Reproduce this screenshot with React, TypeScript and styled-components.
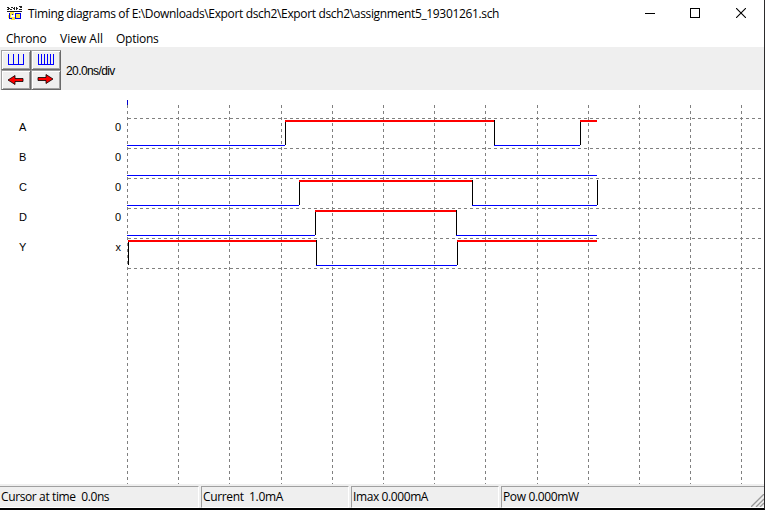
import React from "react";
import styled, { createGlobalStyle } from "styled-components";

const GlobalStyle = createGlobalStyle`
  * { box-sizing: border-box; }
  body { margin: 0; background: #fff; overflow: hidden; }
`;

const Window = styled.div`
  width: 765px;
  height: 510px;
  display: flex;
  flex-direction: column;
  background: #fff;
  color: #000;
  border-right: 1px solid #2c2b2c;
  border-bottom: 2px solid #000;
  font: 12px/16px "Open Sans", "Noto Sans", sans-serif;
  white-space: pre;
  overflow: hidden;
`;

const TitleBar = styled.header`
  height: 30px;
  flex: none;
  display: flex;
  padding: 6px 18px 0 7px;
`;

const Title = styled.h1`
  margin: 0 0 0 6px;
  flex: 1;
  font-size: 12px;
  font-weight: 400;
  letter-spacing: -0.345px;
`;

const Controls = styled.div`
  display: flex;
  gap: 35px;
  padding-top: 2px;
`;

const MenuBar = styled.nav`
  height: 17px;
  flex: none;
  display: flex;
  padding-left: 6px;
`;

const MenuItem = styled.span<{ $width: number; $spacing?: number }>`
  width: ${(p) => p.$width}px;
  letter-spacing: ${(p) => p.$spacing ?? 0}px;
  line-height: 17px;
`;

const Toolbar = styled.div`
  height: 43px;
  flex: none;
  display: flex;
  align-items: center;
  gap: 5px;
  padding: 2px 0 0 1px;
  background: #efefef;
`;

const ButtonGrid = styled.div`
  display: grid;
  grid-template-columns: 30px 30px;
  grid-template-rows: 20px 20px;
`;

const ToolButton = styled.button`
  display: flex;
  align-items: center;
  justify-content: center;
  padding: 0 1px 0 0;
  background: #efefef;
  border: 1px solid;
  border-color: #a0a0a0 #696969 #696969 #a0a0a0;
  box-shadow: inset 1px 1px #fff, inset -1px -1px #a0a0a0;
`;

const Scale = styled.span`
  font: 12px/16px "Liberation Sans", sans-serif;
  letter-spacing: -0.6px;
  padding-top: 2px;
`;

const Workspace = styled.main`
  height: 394px;
  flex: none;
  display: flex;
`;

const Signals = styled.div`
  width: 127px;
  padding: 22px 6px 0 19px;
`;

const SignalRow = styled.div`
  height: 30px;
  display: flex;
  justify-content: space-between;
  font: 11px/30px "Liberation Sans", sans-serif;
`;

const StatusBar = styled.footer`
  height: 24px;
  flex: none;
  display: grid;
  grid-template-columns: 199px 148px 148px 1fr;
  column-gap: 2px;
  padding-top: 2px;
  background: #efefef;
`;

const StatusPanel = styled.div<{ $first?: boolean; $last?: boolean; $spacing: number }>`
  display: flex;
  justify-content: space-between;
  align-items: flex-end;
  border: 1px solid;
  border-color: #a0a0a0 #fff #fff #a0a0a0;
  border-left-width: ${(p) => (p.$first ? 0 : 1)}px;
  border-right-width: ${(p) => (p.$last ? 0 : 1)}px;
  padding-left: 1px;
  line-height: 20px;
  letter-spacing: ${(p) => p.$spacing}px;
`;

const Glyph = styled.svg<{ $smooth?: boolean }>`
  display: block;
  flex: none;
  shape-rendering: ${(p) => (p.$smooth ? "auto" : "crispEdges")};
`;

const columns = [0, 51, 102, 154, 205, 256, 307, 358, 410, 461, 512, 563, 614];

type Segment = [from: number, to: number, high: boolean];
interface Signal {
  name: string;
  value: string;
  segments: Segment[];
  edges: number[];
}

const signals: Signal[] = [
  { name: "A", value: "0", segments: [[0, 158, false], [158, 367, true], [367, 453, false], [453, 470, true]], edges: [158, 367, 453] },
  { name: "B", value: "0", segments: [[0, 470, false]], edges: [] },
  { name: "C", value: "0", segments: [[0, 172, false], [172, 345, true], [345, 470, false]], edges: [172, 345, 470] },
  { name: "D", value: "0", segments: [[0, 188, false], [188, 329, true], [329, 470, false]], edges: [188, 329] },
  { name: "Y", value: "x", segments: [[1, 189, true], [189, 330, false], [330, 470, true]], edges: [1, 189, 330] },
];

function TimingChart() {
  return (
    <Glyph width="637" height="394" viewBox="0 0 637 394">
      <g stroke="#808080" strokeDasharray="3 3">
        {columns.map((x) => (
          <path key={x} d={`M${x + 0.5} 15V394`} />
        ))}
        {[0, 1, 2, 3, 4, 5].map((row) => (
          <path key={row} d={`M1 ${28.5 + row * 30}H637`} />
        ))}
      </g>
      <path d="M.5 10v5" stroke="#0000d0" />
      {signals.map((signal, row) => (
        <g key={signal.name} transform={`translate(0 ${row * 30})`}>
          {signal.segments.map(([from, to, high]) => (
            <rect key={from} x={from} y={high ? 30 : 55} width={to - from} height={high ? 2 : 1} fill={high ? "#f00" : "#00f"} />
          ))}
          {signal.edges.map((x) => {
            const rising = signal.segments.some(([from, , high]) => from === x && high);
            return <rect key={x} x={x} y={rising ? 32 : 30} width="1" height={rising ? 23 : 25} fill="#000" />;
          })}
        </g>
      ))}
    </Glyph>
  );
}

function AppIcon() {
  return (
    <Glyph width="15" height="16" viewBox="0 0 15 16">
      <path fill="#222" d="M0 1h2v1H0zM1 2h2v1H1zM0 3h2v1H0zM4 1h2v1H4zM3 3h2v1H3zM6 2h2v1H6zM7 1h1v3H7zM9 1h1v3H9zM10 2h1v1h-1zM12 0h3v1h-3zM13 1h2v1h-2zM12 3h3v1h-3zM0 5h15v1H0z" />
      <path fill="#ffe740" d="M3 6h4v3H3zM9 7h4v5H9zM1 9h3v3H1zM4 11h4v3H4z" />
      <path fill="#0000e6" d="M2 7h1v6H2zM3 12h2v1H3zM5 8h1v1H5zM8 7h1v6H8zM9 7h5v1H9zM13 8h1v4h-1zM8 12h6v1H8z" />
    </Glyph>
  );
}

function PulseIcon({ bars, step }: { bars: number; step: number }) {
  const width = (bars - 1) * step + 1;
  const marks = Array.from({ length: bars }, (_, i) => `M${i * step + 0.5} 0v11`).join("");
  return (
    <Glyph width={width} height="11">
      <path d={`${marks}M0 10.5H${width}`} stroke="#00f" fill="none" />
    </Glyph>
  );
}

function ArrowIcon({ right = false }: { right?: boolean }) {
  return (
    <Glyph $smooth width="17" height="11" viewBox="0 0 17 11">
      <path
        transform={right ? undefined : "translate(17 1) scale(-1 1)"}
        d="M1 3.5h8v-3l7 4.5-7 4.5v-3H1z"
        fill="#f00"
        stroke="#000"
        strokeWidth=".8"
      />
    </Glyph>
  );
}

export default function App() {
  return (
    <>
      <GlobalStyle />
      <Window>
        <TitleBar>
          <AppIcon />
          <Title>Timing diagrams of E:\Downloads\Export dsch2\Export dsch2\assignment5_19301261.sch</Title>
          <Controls>
            <Glyph width="10" height="11"><path d="M0 5.5h10" stroke="#000" /></Glyph>
            <Glyph width="11" height="10"><path d="M.5.5h9v9h-9z" fill="none" stroke="#000" /></Glyph>
            <Glyph $smooth width="10" height="10"><path d="M0 0l10 10M10 0L0 10" stroke="#000" strokeWidth="1.1" /></Glyph>
          </Controls>
        </TitleBar>
        <MenuBar>
          <MenuItem $width={54} $spacing={-0.2}>Chrono</MenuItem>
          <MenuItem $width={56}>View All</MenuItem>
          <MenuItem $width={60} $spacing={-0.25}>Options</MenuItem>
        </MenuBar>
        <Toolbar>
          <ButtonGrid>
            <ToolButton aria-label="Wide time scale"><PulseIcon bars={4} step={5} /></ToolButton>
            <ToolButton aria-label="Narrow time scale"><PulseIcon bars={6} step={3} /></ToolButton>
            <ToolButton aria-label="Scroll left"><ArrowIcon /></ToolButton>
            <ToolButton aria-label="Scroll right"><ArrowIcon right /></ToolButton>
          </ButtonGrid>
          <Scale>20.0ns/div</Scale>
        </Toolbar>
        <Workspace>
          <Signals>
            {signals.map((signal) => (
              <SignalRow key={signal.name}>
                <span>{signal.name}</span>
                <span>{signal.value}</span>
              </SignalRow>
            ))}
          </Signals>
          <TimingChart />
        </Workspace>
        <StatusBar>
          <StatusPanel $first $spacing={-0.38}>Cursor at time  0.0ns</StatusPanel>
          <StatusPanel $spacing={-0.36}>Current  1.0mA</StatusPanel>
          <StatusPanel $spacing={-0.4}>Imax 0.000mA</StatusPanel>
          <StatusPanel $last $spacing={-0.36}>
            Pow 0.000mW
            <Glyph $smooth width="13" height="13">
              <path d="M0 13L13 0M5 13l8-8M9 13l4-4" stroke="#999" strokeWidth="1.3" />
            </Glyph>
          </StatusPanel>
        </StatusBar>
      </Window>
    </>
  );
}
